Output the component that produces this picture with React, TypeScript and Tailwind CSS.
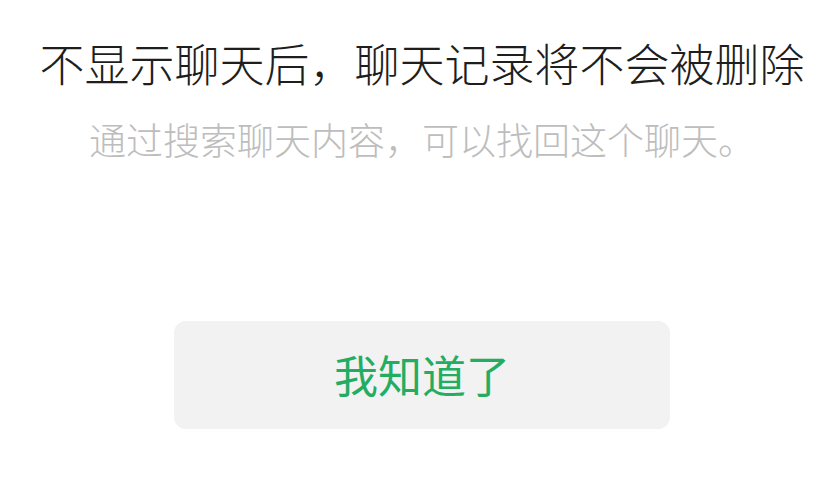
export default function App() {
  return (
    <div
      className="w-[836px] h-[488px] bg-white flex flex-col items-center pl-[8px] pt-[40px]"
      style={{ fontFamily: '"Noto Sans CJK SC", "Noto Sans", sans-serif' }}
    >
      <h1 className="text-[45px] leading-[45px] font-light text-[#1e1e1e] whitespace-nowrap">
        不显示聊天后，聊天记录将不会被删除
      </h1>
      <p className="mt-[36px] text-[37px] leading-[37px] font-light text-[#bdbdbd] whitespace-nowrap">
        通过搜索聊天内容，可以找回这个聊天。
      </p>
      <button className="mt-[163px] w-[496px] h-[108px] rounded-[12px] bg-[#f2f2f2] text-[44px] leading-none font-normal text-[#22ad63] pb-[2px]">
        我知道了
      </button>
    </div>
  );
}
